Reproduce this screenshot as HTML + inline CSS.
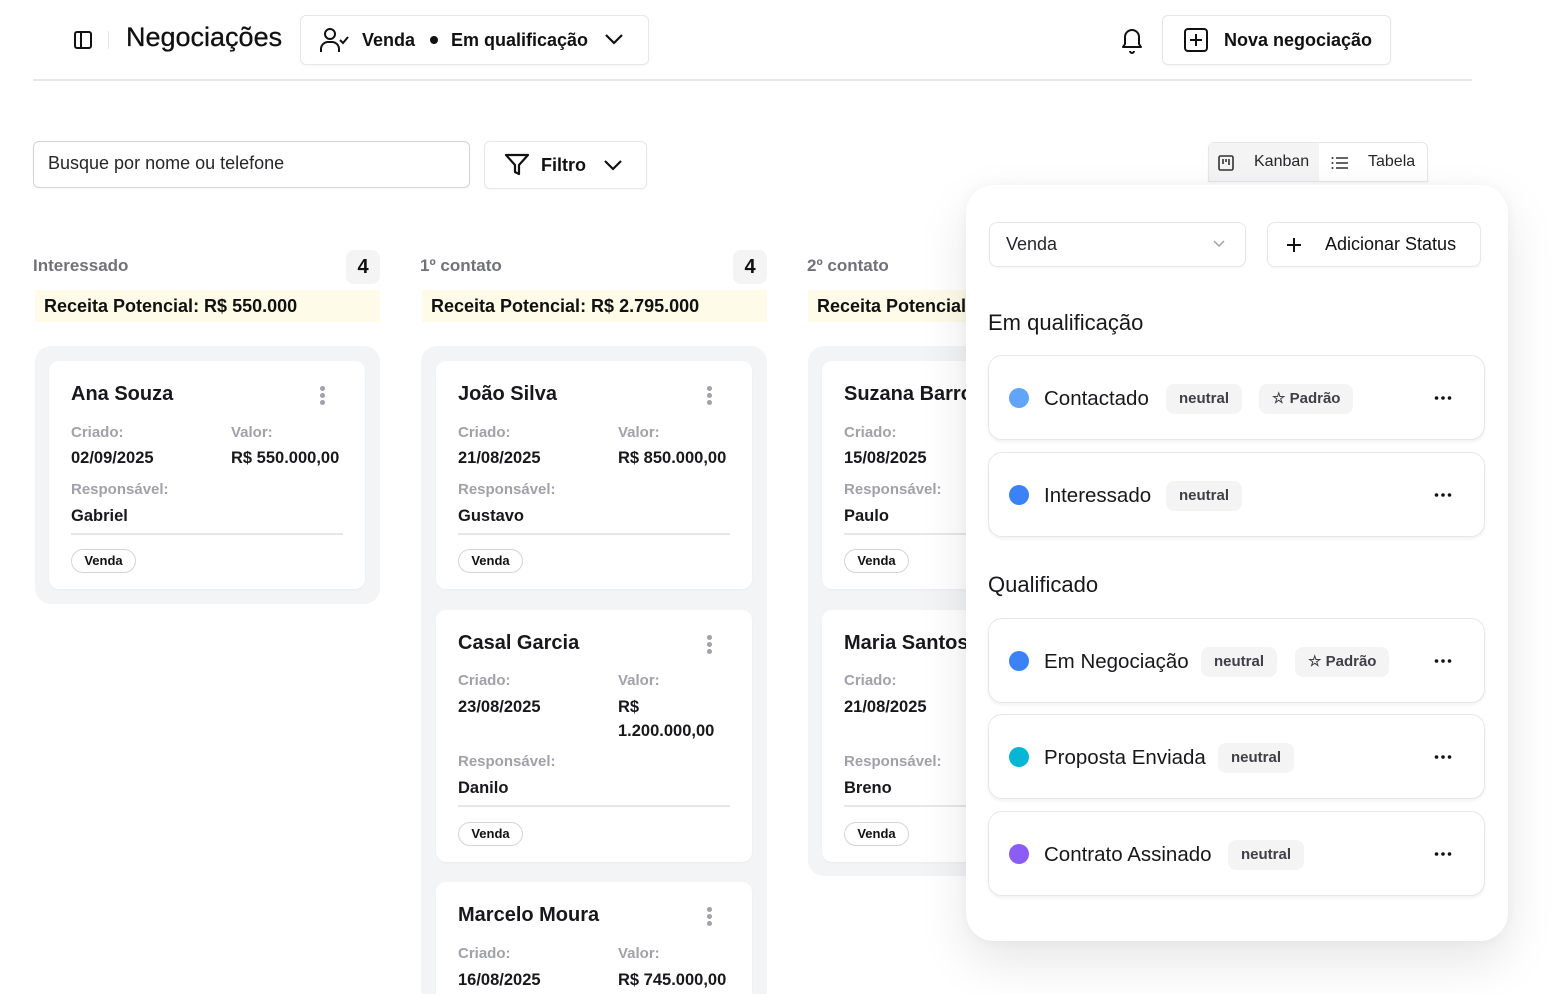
<!DOCTYPE html>
<html><head><meta charset="utf-8"><style>
*{box-sizing:border-box;margin:0;padding:0}
html,body{width:1552px;height:994px;overflow:hidden}
body{background:#fff;font-family:"Liberation Sans",Arial,sans-serif;color:#111;position:relative}
.a{position:absolute}
.box{position:absolute;border:1px solid #e5e7eb;border-radius:6px;background:#fff;box-shadow:0 1px 2px rgba(0,0,0,.04)}
.colbg{position:absolute;background:#f3f4f6;border-radius:16px}
.card{position:absolute;background:#fff;border-radius:10px;width:316px;box-shadow:0 1px 2px rgba(0,0,0,.04)}
.card .n{position:absolute;left:22px;font-size:20px;font-weight:700;color:#18181b}
.card .l{position:absolute;font-size:15px;font-weight:700;color:#a1a1aa}
.card .v{position:absolute;font-size:16.5px;font-weight:700;color:#18181b;line-height:24px}
.card .hr{position:absolute;left:22px;width:272px;height:2px;background:#e5e7eb}
.card .chip{position:absolute;left:22px;width:65px;height:24px;border:1px solid #d4d4d8;border-radius:12px;font-size:13px;font-weight:700;text-align:center;line-height:22px}
.card .dots{position:absolute;left:271px;width:5px}
.card .dots i{display:block;width:5px;height:5px;border-radius:50%;background:#a1a1aa;margin-bottom:2px}
.chd{position:absolute;font-size:17px;font-weight:700;color:#71717a}
.cnt{position:absolute;width:34px;height:34px;border-radius:8px;background:#f4f4f5;font-size:20px;font-weight:700;text-align:center;line-height:34px}
.rec{position:absolute;height:32px;background:#fefce8;font-size:18px;font-weight:700;line-height:32px;padding-left:9px}
.row{position:absolute;left:988px;width:497px;height:85px;border:1px solid #e5e7eb;border-radius:14px;background:#fff;box-shadow:0 2px 3px rgba(0,0,0,.06)}
.row .dot{position:absolute;left:20px;top:32px;width:20px;height:20px;border-radius:50%}
.row .t{position:absolute;left:55px;top:31px;font-size:20.5px;color:#18181b}
.row .tag{position:absolute;top:28px;height:30px;border-radius:8px;background:#f4f4f5;font-size:15px;font-weight:700;color:#3f3f46;line-height:30px;padding:0 13px}
.row svg{position:absolute;left:445px;top:39px}
.sec{position:absolute;left:988px;font-size:22px;color:#18181b}
</style></head><body>

<svg class="a" style="left:73px;top:30px" width="20" height="20" viewBox="0 0 20 20"><rect x="2" y="2" width="16" height="16" rx="2" fill="none" stroke="#111" stroke-width="2"/><line x1="8" y1="2" x2="8" y2="18" stroke="#111" stroke-width="2"/></svg>
<div class="a" style="left:108px;top:31px;width:1px;height:18px;background:#e5e7eb"></div>
<div class="a" style="left:126px;top:22px;font-size:27px;color:#111;-webkit-text-stroke:0.3px #111">Negociações</div>
<div class="box" style="left:300px;top:15px;width:349px;height:50px"></div>
<svg class="a" style="left:318px;top:26px" width="32" height="28" viewBox="0 0 32 28"><circle cx="12" cy="8" r="5" fill="none" stroke="#111" stroke-width="2"/><path d="M3 26v-3a7 7 0 0 1 7-7h4a7 7 0 0 1 7 7v3" fill="none" stroke="#111" stroke-width="2"/><path d="M22 14l3 3 5-6" fill="none" stroke="#111" stroke-width="2"/></svg>
<div class="a" style="left:362px;top:30px;font-size:18px;font-weight:700">Venda</div>
<div class="a" style="left:430px;top:36px;width:8px;height:8px;border-radius:50%;background:#111"></div>
<div class="a" style="left:451px;top:30px;font-size:18px;font-weight:700">Em qualificação</div>
<svg class="a" style="left:604px;top:32px" width="20" height="14" viewBox="0 0 20 14"><path d="M2 3l8 8 8-8" fill="none" stroke="#111" stroke-width="2.2"/></svg>

<svg class="a" style="left:1118px;top:25px" width="28" height="30" viewBox="0 0 28 30"><path d="M5 22h18l-2-3v-7a7 7 0 0 0-14 0v7z" fill="none" stroke="#111" stroke-width="2" stroke-linejoin="round"/><path d="M12 26a2 2 0 0 0 4 0" fill="none" stroke="#111" stroke-width="2"/></svg>
<div class="box" style="left:1162px;top:15px;width:229px;height:50px"></div>
<svg class="a" style="left:1183px;top:27px" width="26" height="26" viewBox="0 0 26 26"><rect x="2" y="2" width="22" height="22" rx="3" fill="none" stroke="#111" stroke-width="2"/><path d="M13 7v12M7 13h12" stroke="#111" stroke-width="2"/></svg>
<div class="a" style="left:1224px;top:30px;font-size:18px;font-weight:700">Nova negociação</div>
<div class="a" style="left:33px;top:79px;width:1439px;height:2px;background:#e5e7eb"></div>

<div class="box" style="left:33px;top:141px;width:437px;height:47px;border-color:#d4d4d8"></div>
<div class="a" style="left:48px;top:153px;font-size:18px;color:#27272a">Busque por nome ou telefone</div>
<div class="box" style="left:484px;top:141px;width:163px;height:48px"></div>
<svg class="a" style="left:504px;top:153px" width="26" height="24" viewBox="0 0 26 24"><path d="M2 2h22l-9 10v9l-4-2v-7z" fill="none" stroke="#111" stroke-width="2.2" stroke-linejoin="round"/></svg>
<div class="a" style="left:541px;top:155px;font-size:18px;font-weight:700">Filtro</div>
<svg class="a" style="left:603px;top:158px" width="20" height="14" viewBox="0 0 20 14"><path d="M2 3l8 8 8-8" fill="none" stroke="#111" stroke-width="2.2"/></svg>

<div class="box" style="left:1208px;top:142px;width:220px;height:40px;border-radius:6px 6px 0 0"></div>
<div class="a" style="left:1209px;top:143px;width:110px;height:38px;background:#f4f4f5"></div>
<svg class="a" style="left:1217px;top:154px" width="18" height="18" viewBox="0 0 18 18"><rect x="2" y="2" width="14" height="14" rx="1.5" fill="none" stroke="#333" stroke-width="1.6"/><path d="M6 5v5M9 5v3M12 5v6" stroke="#333" stroke-width="1.6"/></svg>
<div class="a" style="left:1254px;top:153px;font-size:16px;color:#27272a">Kanban</div>
<svg class="a" style="left:1331px;top:155px" width="18" height="16" viewBox="0 0 18 16"><path d="M5 3h12M5 8h12M5 13h12" stroke="#333" stroke-width="1.6"/><circle cx="1.5" cy="3" r="1" fill="#333"/><circle cx="1.5" cy="8" r="1" fill="#333"/><circle cx="1.5" cy="13" r="1" fill="#333"/></svg>
<div class="a" style="left:1368px;top:153px;font-size:16px;color:#27272a">Tabela</div>

<div class="chd" style="left:33px;top:256px">Interessado</div>
<div class="cnt" style="left:346px;top:250px">4</div>
<div class="rec" style="left:35px;top:290px;width:345px">Receita Potencial: R$ 550.000</div>
<div class="colbg" style="left:35px;top:346px;width:345px;height:258px"></div>
<div class="card" style="left:49px;top:361px;height:228px">
<div class="n" style="top:22px">Ana Souza</div><div class="dots" style="top:25px"><i></i><i></i><i></i></div>
<div class="l" style="left:22px;top:63px">Criado:</div><div class="l" style="left:182px;top:63px">Valor:</div>
<div class="v" style="left:22px;top:85px">02/09/2025</div><div class="v" style="left:182px;top:85px">R$ 550.000,00</div>
<div class="l" style="left:22px;top:120px">Responsável:</div><div class="v" style="left:22px;top:143px">Gabriel</div>
<div class="hr" style="top:172px"></div><div class="chip" style="top:188px">Venda</div></div>

<div class="chd" style="left:420px;top:256px">1º contato</div>
<div class="cnt" style="left:733px;top:250px">4</div>
<div class="rec" style="left:422px;top:290px;width:345px">Receita Potencial: R$ 2.795.000</div>
<div class="colbg" style="left:421px;top:346px;width:346px;height:660px"></div>
<div class="card" style="left:436px;top:361px;height:228px">
<div class="n" style="top:22px">João Silva</div><div class="dots" style="top:25px"><i></i><i></i><i></i></div>
<div class="l" style="left:22px;top:63px">Criado:</div><div class="l" style="left:182px;top:63px">Valor:</div>
<div class="v" style="left:22px;top:85px">21/08/2025</div><div class="v" style="left:182px;top:85px">R$ 850.000,00</div>
<div class="l" style="left:22px;top:120px">Responsável:</div><div class="v" style="left:22px;top:143px">Gustavo</div>
<div class="hr" style="top:172px"></div><div class="chip" style="top:188px">Venda</div></div>
<div class="card" style="left:436px;top:610px;height:252px">
<div class="n" style="top:22px">Casal Garcia</div><div class="dots" style="top:25px"><i></i><i></i><i></i></div>
<div class="l" style="left:22px;top:62px">Criado:</div><div class="l" style="left:182px;top:62px">Valor:</div>
<div class="v" style="left:22px;top:85px">23/08/2025</div><div class="v" style="left:182px;top:85px">R$<br>1.200.000,00</div>
<div class="l" style="left:22px;top:143px">Responsável:</div><div class="v" style="left:22px;top:166px">Danilo</div>
<div class="hr" style="top:195px"></div><div class="chip" style="top:212px">Venda</div></div>
<div class="card" style="left:436px;top:882px;height:140px">
<div class="n" style="top:22px">Marcelo Moura</div><div class="dots" style="top:25px"><i></i><i></i><i></i></div>
<div class="l" style="left:22px;top:63px">Criado:</div><div class="l" style="left:182px;top:63px">Valor:</div>
<div class="v" style="left:22px;top:86px">16/08/2025</div><div class="v" style="left:182px;top:86px">R$ 745.000,00</div></div>

<div class="chd" style="left:807px;top:256px">2º contato</div>
<div class="rec" style="left:808px;top:290px;width:200px;overflow:hidden;white-space:nowrap">Receita Potencial: R$ 1.000.000</div>
<div class="colbg" style="left:808px;top:346px;width:300px;height:530px"></div>
<div class="card" style="left:822px;top:361px;height:228px">
<div class="n" style="top:22px">Suzana Barros</div>
<div class="l" style="left:22px;top:63px">Criado:</div>
<div class="v" style="left:22px;top:85px">15/08/2025</div>
<div class="l" style="left:22px;top:120px">Responsável:</div><div class="v" style="left:22px;top:143px">Paulo</div>
<div class="hr" style="top:172px"></div><div class="chip" style="top:188px">Venda</div></div>
<div class="card" style="left:822px;top:610px;height:252px">
<div class="n" style="top:22px">Maria Santos</div>
<div class="l" style="left:22px;top:62px">Criado:</div>
<div class="v" style="left:22px;top:85px">21/08/2025</div>
<div class="l" style="left:22px;top:143px">Responsável:</div><div class="v" style="left:22px;top:166px">Breno</div>
<div class="hr" style="top:195px"></div><div class="chip" style="top:212px">Venda</div></div>

<div class="a" style="left:966px;top:185px;width:542px;height:756px;background:#fff;border-radius:28px;box-shadow:0 20px 50px rgba(0,0,0,.10),0 0 12px rgba(0,0,0,.04)"></div>
<div class="box" style="left:989px;top:222px;width:257px;height:45px;border-radius:8px"></div>
<div class="a" style="left:1006px;top:234px;font-size:18px;color:#27272a">Venda</div>
<svg class="a" style="left:1212px;top:239px" width="14" height="10" viewBox="0 0 14 10"><path d="M2 2l5 5 5-5" fill="none" stroke="#a1a1aa" stroke-width="1.5"/></svg>
<div class="box" style="left:1267px;top:222px;width:214px;height:45px;border-radius:8px"></div>
<svg class="a" style="left:1285px;top:236px" width="18" height="18" viewBox="0 0 18 18"><path d="M9 2v14M2 9h14" stroke="#111" stroke-width="2"/></svg>
<div class="a" style="left:1325px;top:234px;font-size:18px;color:#111">Adicionar Status</div>

<div class="sec" style="top:310px">Em qualificação</div>
<div class="row" style="top:355px"><div class="dot" style="background:#60a5fa"></div><div class="t">Contactado</div><div class="tag" style="left:177px">neutral</div><div class="tag" style="left:270px">☆ Padrão</div><svg width="18" height="6" viewBox="0 0 18 6"><circle cx="2.5" cy="3" r="1.8" fill="#111"/><circle cx="9" cy="3" r="1.8" fill="#111"/><circle cx="15.5" cy="3" r="1.8" fill="#111"/></svg></div>
<div class="row" style="top:452px"><div class="dot" style="background:#3b82f6"></div><div class="t">Interessado</div><div class="tag" style="left:177px">neutral</div><svg width="18" height="6" viewBox="0 0 18 6"><circle cx="2.5" cy="3" r="1.8" fill="#111"/><circle cx="9" cy="3" r="1.8" fill="#111"/><circle cx="15.5" cy="3" r="1.8" fill="#111"/></svg></div>
<div class="sec" style="top:572px">Qualificado</div>
<div class="row" style="top:618px"><div class="dot" style="background:#3b82f6"></div><div class="t">Em Negociação</div><div class="tag" style="left:212px">neutral</div><div class="tag" style="left:306px">☆ Padrão</div><svg width="18" height="6" viewBox="0 0 18 6"><circle cx="2.5" cy="3" r="1.8" fill="#111"/><circle cx="9" cy="3" r="1.8" fill="#111"/><circle cx="15.5" cy="3" r="1.8" fill="#111"/></svg></div>
<div class="row" style="top:714px"><div class="dot" style="background:#06b6d4"></div><div class="t">Proposta Enviada</div><div class="tag" style="left:229px">neutral</div><svg width="18" height="6" viewBox="0 0 18 6"><circle cx="2.5" cy="3" r="1.8" fill="#111"/><circle cx="9" cy="3" r="1.8" fill="#111"/><circle cx="15.5" cy="3" r="1.8" fill="#111"/></svg></div>
<div class="row" style="top:811px"><div class="dot" style="background:#8b5cf6"></div><div class="t">Contrato Assinado</div><div class="tag" style="left:239px">neutral</div><svg width="18" height="6" viewBox="0 0 18 6"><circle cx="2.5" cy="3" r="1.8" fill="#111"/><circle cx="9" cy="3" r="1.8" fill="#111"/><circle cx="15.5" cy="3" r="1.8" fill="#111"/></svg></div>
</body></html>
